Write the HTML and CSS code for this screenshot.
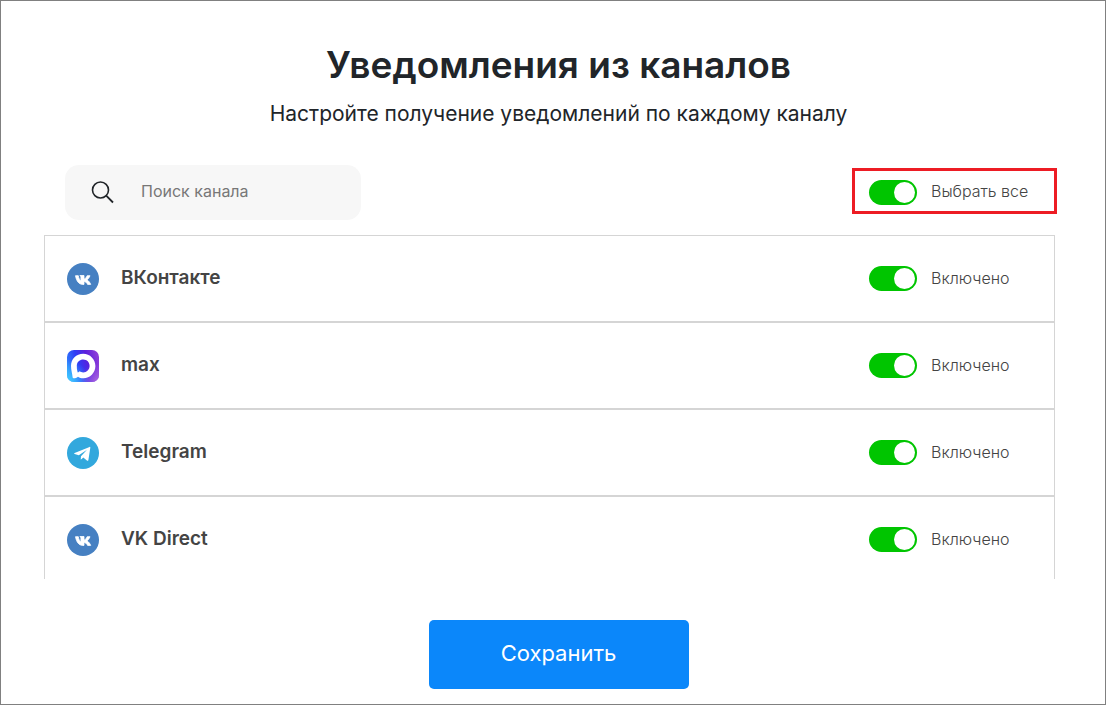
FILE: index.html
```html
<!DOCTYPE html>
<html lang="ru">
<head>
    <meta charset="UTF-8">
    <meta name="viewport" content="width=device-width, initial-scale=1.0">
    <title>Уведомления из каналов</title>
    <link rel="stylesheet" href="styles.css">
</head>
<body>
    <svg class="sprite" aria-hidden="true">
        <symbol id="vk" viewBox="0 0 32 32">
            <circle cx="16" cy="16" r="16" fill="#4680c2"/>
            <path fill="#fff" stroke="#fff" stroke-width=".8" stroke-linejoin="round" d="M15.800 21.400C11.800 21.400 9.400 18 8.500 12.700H11.300C11.800 15.800 12.800 17.300 13.900 17.800V14.500C13.900 13.500 13.500 13 12.900 12.500H17V16.300C18.300 15.700 19.400 14.200 20.200 12.700H23C22.300 14.600 21 16 20 16.800C21.300 17.600 22.800 19.200 23.700 21.400H20.600C19.800 19.800 18.500 18.600 17 18.200V21.400Z"/>
        </symbol>
    </svg>

    <main class="page">
        <header class="heading">
            <h1 class="title">Уведомления из каналов</h1>
            <p class="subtitle">Настройте получение уведомлений по каждому каналу</p>
        </header>

        <div class="toolbar">
            <label class="search">
                <svg class="search-icon" viewBox="0 0 24 24" aria-hidden="true">
                    <circle cx="9.500" cy="9" r="8" fill="none" stroke="#212529" stroke-width="1.600"/>
                    <path d="M15.200 14.700L22 21.500" stroke="#212529" stroke-width="1.800"/>
                </svg>
                <input class="search-input" type="text" placeholder="Поиск канала" aria-label="Поиск канала">
            </label>
            <label class="switch select-all">
                <input class="toggle" type="checkbox" checked>
                <span class="state">Выбрать все</span>
            </label>
        </div>

        <ul class="channels">
            <li class="channel">
                <svg class="logo" aria-hidden="true"><use href="#vk"/></svg>
                <span class="name">ВКонтакте</span>
                <label class="switch">
                    <input class="toggle" type="checkbox" checked>
                    <span class="state">Включено</span>
                </label>
            </li>
            <li class="channel">
                <svg class="logo" viewBox="0 0 32 32" aria-hidden="true">
                    <defs>
                        <linearGradient id="max-bg" x1="0" y1="0.7" x2="1" y2="0.4">
                            <stop offset="0" stop-color="#2f8dff"/>
                            <stop offset="0.4" stop-color="#2f3cf5"/>
                            <stop offset="0.7" stop-color="#5a1fdc"/>
                            <stop offset="1" stop-color="#8a3ad8"/>
                        </linearGradient>
                        <radialGradient id="max-cyan" cx="0" cy="1" r="0.7">
                            <stop offset="0" stop-color="#3fd0ff"/>
                            <stop offset="1" stop-color="#3fd0ff" stop-opacity="0"/>
                        </radialGradient>
                        <radialGradient id="max-pink" cx="1" cy="1" r="0.6">
                            <stop offset="0" stop-color="#b06ae0"/>
                            <stop offset="1" stop-color="#b06ae0" stop-opacity="0"/>
                        </radialGradient>
                    </defs>
                    <rect width="32" height="32" rx="7" fill="url(#max-bg)"/>
                    <rect width="32" height="32" rx="7" fill="url(#max-cyan)"/>
                    <rect width="32" height="32" rx="7" fill="url(#max-pink)"/>
                    <path fill="#fff" fill-rule="evenodd" d="M16.200 3.700C9.200 3.700 4 9 4 15.800C4 20.500 5.300 23.500 5.600 27.200C5.800 29 8.500 28.500 11 26.700C12.500 27.800 14.200 28.300 16.400 28.300C23 28.300 28.400 22.700 28.400 16C28.400 9.300 23 3.700 16.200 3.700ZM16.300 9.600C19.900 9.600 22.600 12.400 22.600 16C22.600 19.600 19.800 22.400 16.200 22.400C14.600 22.400 13.600 21.800 12.700 21.200C12 22 11.200 22.600 10.600 22.300C10 20.300 9.700 18 9.800 15.600C10 12.100 12.700 9.600 16.300 9.600Z"/>
                </svg>
                <span class="name">max</span>
                <label class="switch">
                    <input class="toggle" type="checkbox" checked>
                    <span class="state">Включено</span>
                </label>
            </li>
            <li class="channel">
                <svg class="logo" viewBox="0 0 32 32" aria-hidden="true">
                    <circle cx="16" cy="16" r="16" fill="#32a8dd"/>
                    <path fill="#fff" d="M22.600 9.900L7.600 16C7 16.300 7 16.800 7.600 17L11.800 18.300L20 12.800L14 19.200L13.700 22.400C14.100 22.400 14.400 22.200 14.700 21.900L16.300 20.600L19.900 23.500C20.600 24 21.200 23.800 21.400 22.900L23.300 10.700C23.400 10 23.100 9.700 22.600 9.900Z"/>
                </svg>
                <span class="name">Telegram</span>
                <label class="switch">
                    <input class="toggle" type="checkbox" checked>
                    <span class="state">Включено</span>
                </label>
            </li>
            <li class="channel">
                <svg class="logo" aria-hidden="true"><use href="#vk"/></svg>
                <span class="name">VK Direct</span>
                <label class="switch">
                    <input class="toggle" type="checkbox" checked>
                    <span class="state">Включено</span>
                </label>
            </li>
        </ul>

        <footer class="actions">
            <button class="save" type="button">Сохранить</button>
        </footer>
    </main>
</body>
</html>
```
FILE: styles.css
```css
* {
    box-sizing: border-box;
}

body {
    margin: 0;
    background: #fff;
    color: #212529;
    font-family: Inter, "Liberation Sans", sans-serif;
}

.sprite {
    display: none;
}

.page {
    margin: 0 1px 0 0;
    padding: 40px 48px 15px 43px;
    border: 1px solid #808080;
}

.heading,
.actions {
    padding-left: 16px;
    text-align: center;
}

.title {
    margin: 0;
    font-size: 37px;
    font-weight: 600;
    line-height: 48px;
}

.subtitle {
    margin: 8px 0 0;
    font-size: 21px;
    line-height: 34px;
}

.toolbar {
    display: flex;
    justify-content: space-between;
    align-items: center;
    margin: 34px 0 15px 21px;
}

.search {
    display: flex;
    align-items: center;
    gap: 26px;
    width: 296px;
    height: 55px;
    padding: 0 26px;
    background: #f7f7f7;
    border-radius: 14px;
}

.search-icon {
    flex: none;
    width: 24px;
    height: 24px;
}

.search-input {
    width: 100%;
    min-width: 0;
    padding: 0 0 3px;
    border: none;
    outline: none;
    background: none;
    color: #444;
    font-family: inherit;
    font-size: 16px;
}

.search-input::placeholder {
    color: #777;
}

.switch {
    display: flex;
    align-items: center;
    gap: 14px;
    width: 185px;
    cursor: pointer;
}

.select-all {
    width: 205px;
    height: 46px;
    margin-bottom: 3px;
    padding: 2px 14px 0;
    border: 3px solid #ed1c24;
}

.toggle {
    appearance: none;
    flex: none;
    display: flex;
    justify-content: flex-end;
    align-items: center;
    width: 48px;
    height: 25px;
    margin: 0;
    padding: 2px;
    background: #ccc;
    border-radius: 13px;
    cursor: pointer;
}

.toggle::before {
    content: "";
    width: 21px;
    height: 21px;
    background: #fff;
    border-radius: 50%;
}

.toggle:checked {
    background: #00c500;
}

.toggle:not(:checked) {
    justify-content: flex-start;
}

.state {
    padding-bottom: 2px;
    color: #444;
    font-size: 16px;
    font-weight: 300;
    line-height: 24px;
}

.channels {
    max-height: 344px;
    margin: 0 2px 0 0;
    padding: 0;
    overflow: hidden;
    list-style: none;
}

.channel {
    display: flex;
    align-items: center;
    gap: 22px;
    height: 87px;
    padding-left: 22px;
    border: 1px solid #d5d5d5;
}

.logo {
    flex: none;
    width: 32px;
    height: 32px;
}

.name {
    flex: 1;
    padding-bottom: 1px;
    color: #444;
    font-size: 19px;
    font-weight: 600;
    line-height: 24px;
}

.actions {
    margin-top: 41px;
}

.save {
    display: block;
    width: 260px;
    height: 69px;
    margin: 0 auto;
    padding: 0 0 3px;
    border: none;
    border-radius: 5px;
    background: #0b87fa;
    color: #fff;
    font-family: inherit;
    font-size: 22px;
    cursor: pointer;
}
```
